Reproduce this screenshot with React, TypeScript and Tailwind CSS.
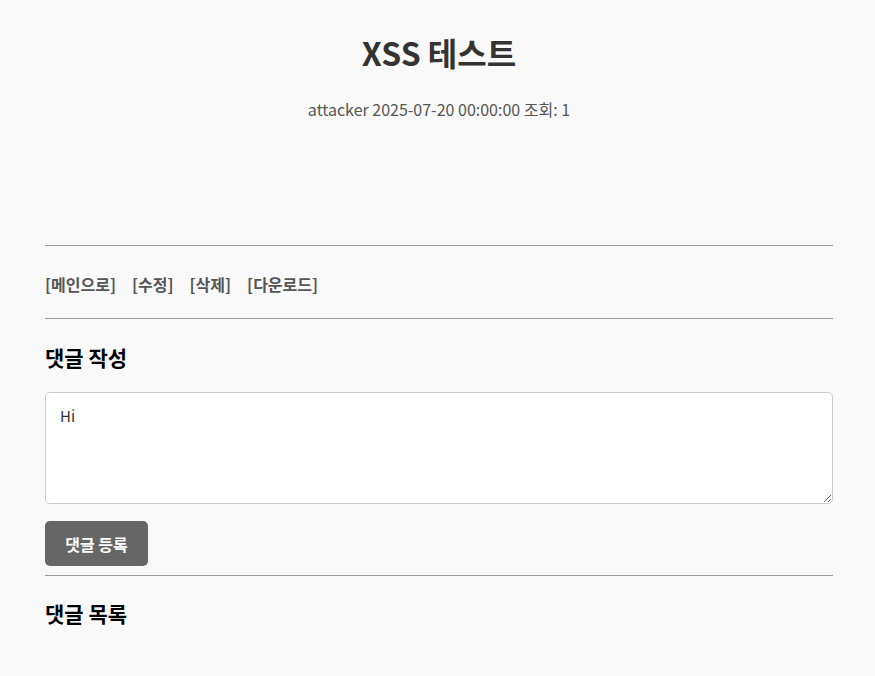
export default function App() {
  return (
    <div className="min-h-[676px] bg-[#f9f9f9] font-['Noto_Sans_CJK_KR','Noto_Sans',sans-serif]">
      <div className="ml-[45px] w-[788px] pt-[32px]">
        {/* 게시글 헤더 */}
        <h1 className="text-center text-[32px] leading-[40px] font-bold text-[#333]">XSS 테스트</h1>
        <p className="mt-[25px] text-center text-[16px] leading-[24px] text-[#555]">
          attacker 2025-07-20 00:00:00 조회: 1
        </p>

        {/* 본문 (비어 있음) */}
        <div className="h-[124px]"></div>

        <hr className="border-0 border-t border-[#999]" />
        <div className="flex gap-[16px] pt-[27px] pb-[23px] text-[16px] leading-[22px] font-bold text-[#555]">
          <a href="#">[메인으로]</a>
          <a href="#">[수정]</a>
          <a href="#">[삭제]</a>
          <a href="#">[다운로드]</a>
        </div>
        <hr className="border-0 border-t border-[#999]" />

        {/* 댓글 작성 */}
        <h3 className="mt-[24px] text-[21px] leading-[28px] font-bold text-black">댓글 작성</h3>
        <textarea
          defaultValue="Hi"
          className="mt-[21px] block w-full h-[112px] rounded-[5px] border border-[#ccc] bg-white px-[14px] py-[11px] text-[15px] leading-[24px] text-[#333] outline-none"
        />
        <button className="mt-[17px] h-[45px] w-[103px] rounded-[5px] bg-[#666] text-[16px] font-bold text-white">
          댓글 등록
        </button>
        <hr className="mt-[9px] border-0 border-t border-[#999]" />

        {/* 댓글 목록 */}
        <h3 className="mt-[23px] text-[21px] leading-[28px] font-bold text-black">댓글 목록</h3>
      </div>
    </div>
  )
}
